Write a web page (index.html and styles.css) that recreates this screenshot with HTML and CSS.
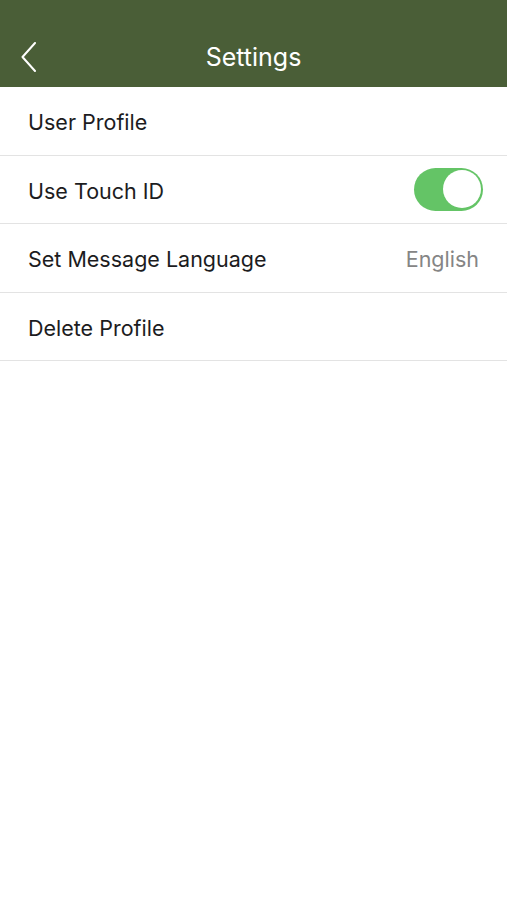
FILE: index.html
```html
<!DOCTYPE html>
<html lang="en">
<head>
  <meta charset="UTF-8">
  <title>Settings</title>
  <link rel="stylesheet" href="styles.css">
</head>
<body>

<!--顶部导航-->
<div class="nav">
  <a class="back" href="javascript:;">
    <svg width="16" height="30" viewBox="0 0 16 30">
      <polyline points="14,1 1.5,15 14,29" fill="none" stroke="#fff" stroke-width="2" stroke-linecap="round" stroke-linejoin="round"/>
    </svg>
  </a>
  <h1 class="title">Settings</h1>
</div>

<!--设置列表-->
<ul class="list">
  <li class="row">
    <span class="label">User Profile</span>
  </li>
  <li class="row">
    <span class="label">Use Touch ID</span>
    <span class="switch on"><i></i></span>
  </li>
  <li class="row">
    <span class="label">Set Message Language</span>
    <span class="value">English</span>
  </li>
  <li class="row">
    <span class="label">Delete Profile</span>
  </li>
</ul>

</body>
</html>
```

FILE: styles.css
```css
* {
  margin: 0;
  padding: 0;
  list-style: none;
}

body {
  background-color: #fff;
  font-family: Inter, "Liberation Sans", sans-serif;
  color: #1c1c1e;
}

/*导航栏：上面27px是状态栏*/
.nav {
  height: 87px;
  padding-top: 27px;
  box-sizing: border-box;
  background-color: #4a5e37;
  display: flex;
  align-items: center;
  justify-content: center;
  position: relative;
}

.title {
  font-size: 25px;
  font-weight: 400;
  color: #fff;
}

.back {
  position: absolute;
  left: 21px;
  top: 42px;
  display: block;
  width: 16px;
  height: 30px;
}

.row {
  height: 68.5px;
  box-sizing: border-box;
  padding: 3px 28px 0;
  border-bottom: 1px solid #e3e3e3;
  display: flex;
  align-items: center;
  justify-content: space-between;
  font-size: 21.5px;
}

.value {
  color: #858585;
}

/*开关*/
.switch {
  width: 69px;
  height: 43px;
  border-radius: 22px;
  background-color: #64c466;
  margin: -3px -4px 0 0;
  display: flex;
  align-items: center;
  justify-content: flex-end;
  padding: 0 2px;
  box-sizing: border-box;
}

.switch i {
  display: block;
  width: 38px;
  height: 38px;
  border-radius: 50%;
  background-color: #fff;
}
```
